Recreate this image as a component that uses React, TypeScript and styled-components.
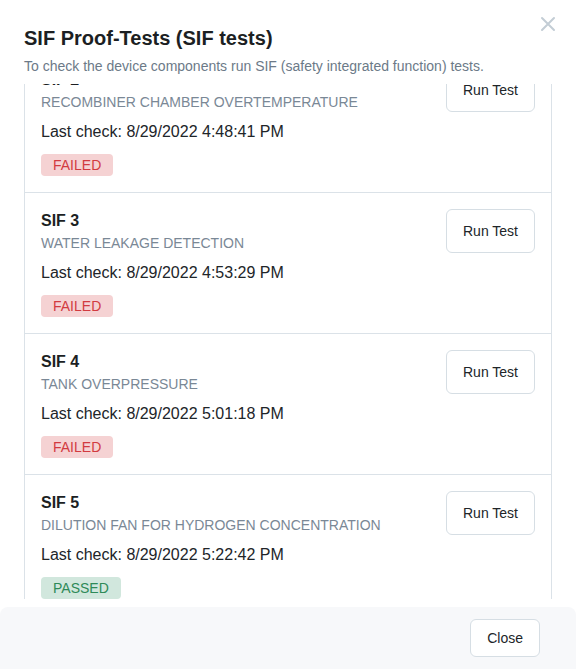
import React, { useLayoutEffect, useRef } from "react";
import styled, { createGlobalStyle } from "styled-components";

const GlobalStyle = createGlobalStyle`
  html, body {
    margin: 0;
    padding: 0;
    background: #ffffff;
  }
  body {
    font-family: "Liberation Sans", Arial, sans-serif;
    color: #212529;
  }
  * {
    box-sizing: border-box;
  }
`;

const Modal = styled.div`
  position: relative;
  width: 576px;
  height: 669px;
  display: flex;
  flex-direction: column;
  background: #ffffff;
  overflow: hidden;
`;

const Header = styled.div`
  padding: 24px 24px 0;
`;

const Title = styled.h2`
  margin: 0;
  font-size: 20px;
  line-height: 28px;
  font-weight: 700;
  color: #1c1f23;
`;

const Subtitle = styled.p`
  margin: 4px 0 0;
  font-size: 14px;
  line-height: 20px;
  color: #6c7a88;
`;

const CloseIcon = styled.button`
  position: absolute;
  top: 14px;
  right: 18px;
  width: 20px;
  height: 20px;
  padding: 0;
  border: none;
  background: transparent;
  color: #c3cdd5;
  display: flex;
  align-items: center;
  justify-content: center;
  cursor: pointer;
`;

const Body = styled.div`
  margin: 8px 24px 0;
  height: 516px;
  overflow-y: auto;
  scrollbar-width: none;
  &::-webkit-scrollbar {
    display: none;
  }
`;

const List = styled.ul`
  margin: 0;
  padding: 0;
  list-style: none;
  border-left: 1px solid #dbe2e8;
  border-right: 1px solid #dbe2e8;
  border-bottom: 1px solid #dbe2e8;
`;

const Item = styled.li`
  display: flex;
  justify-content: space-between;
  align-items: flex-start;
  padding: 16px;
  border-top: 1px solid #dbe2e8;
`;

const Info = styled.div`
  display: flex;
  flex-direction: column;
  align-items: flex-start;
`;

const ItemTitle = styled.div`
  font-size: 16px;
  line-height: 24px;
  font-weight: 700;
  color: #1c1f23;
`;

const ItemName = styled.div`
  font-size: 14px;
  line-height: 20px;
  color: #7a8896;
  text-transform: uppercase;
`;

const LastCheck = styled.div`
  margin-top: 8px;
  font-size: 16px;
  line-height: 24px;
  color: #212529;
`;

const Badge = styled.span<{ $passed: boolean }>`
  margin-top: 10px;
  height: 22px;
  padding: 0 12px;
  display: inline-flex;
  align-items: center;
  border-radius: 4px;
  font-size: 14px;
  background: ${(p) => (p.$passed ? "#d1e7dd" : "#f5d2d3")};
  color: ${(p) => (p.$passed ? "#2e8a58" : "#d23a40")};
`;

const Button = styled.button`
  height: 44px;
  padding: 0 16px;
  border: 1px solid #d6dee4;
  border-radius: 6px;
  background: #ffffff;
  font-family: "Liberation Sans", Arial, sans-serif;
  font-size: 14px;
  color: #212529;
  cursor: pointer;
  flex-shrink: 0;
`;

const Footer = styled.div`
  margin-top: 8px;
  flex: 1;
  display: flex;
  justify-content: flex-end;
  align-items: flex-start;
  padding: 12px 36px;
  background: #f7f8fa;
  border-radius: 8px 8px 0 0;
`;

const FooterButton = styled(Button)`
  height: 38px;
  padding: 0 16px;
`;

interface SifTest {
  id: number;
  name: string;
  lastCheck: string;
  passed: boolean;
}

const tests: SifTest[] = [
  { id: 1, name: "Emergency stop", lastCheck: "8/29/2022 4:41:07 PM", passed: true },
  { id: 2, name: "Recombiner chamber overtemperature", lastCheck: "8/29/2022 4:48:41 PM", passed: false },
  { id: 3, name: "Water leakage detection", lastCheck: "8/29/2022 4:53:29 PM", passed: false },
  { id: 4, name: "Tank overpressure", lastCheck: "8/29/2022 5:01:18 PM", passed: false },
  { id: 5, name: "Dilution fan for hydrogen concentration", lastCheck: "8/29/2022 5:22:42 PM", passed: true },
];

const App: React.FC = () => {
  const bodyRef = useRef<HTMLDivElement>(null);

  useLayoutEffect(() => {
    if (bodyRef.current) {
      bodyRef.current.scrollTop = 174;
    }
  }, []);

  return (
    <>
      <GlobalStyle />
      <Modal>
        <CloseIcon aria-label="Close">
          <svg width="16" height="16" viewBox="0 0 16 16">
            <path
              d="M2 2L14 14M14 2L2 14"
              stroke="currentColor"
              strokeWidth="2"
              strokeLinecap="round"
            />
          </svg>
        </CloseIcon>
        <Header>
          <Title>SIF Proof-Tests (SIF tests)</Title>
          <Subtitle>
            To check the device components run SIF (safety integrated function) tests.
          </Subtitle>
        </Header>
        <Body ref={bodyRef}>
          <List>
            {tests.map((t) => (
              <Item key={t.id}>
                <Info>
                  <ItemTitle>SIF {t.id}</ItemTitle>
                  <ItemName>{t.name}</ItemName>
                  <LastCheck>Last check: {t.lastCheck}</LastCheck>
                  <Badge $passed={t.passed}>{t.passed ? "PASSED" : "FAILED"}</Badge>
                </Info>
                <Button>Run Test</Button>
              </Item>
            ))}
          </List>
        </Body>
        <Footer>
          <FooterButton>Close</FooterButton>
        </Footer>
      </Modal>
    </>
  );
};

export default App;
